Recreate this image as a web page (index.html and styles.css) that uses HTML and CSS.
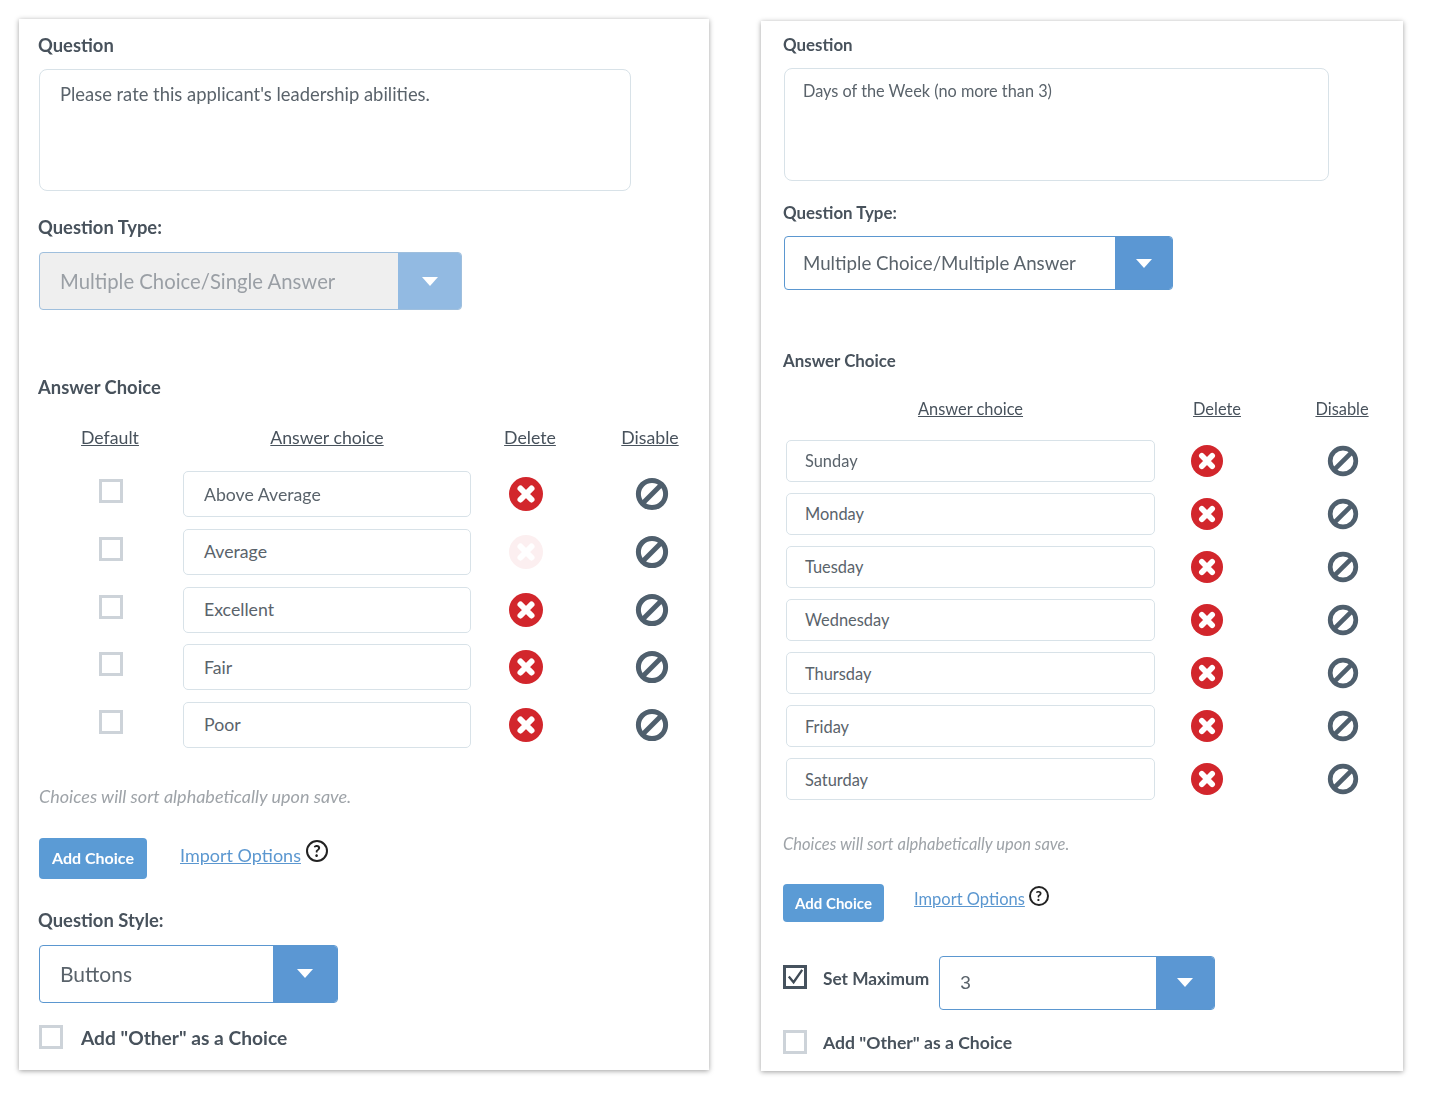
FILE: index.html
```html
<!DOCTYPE html>
<html lang="en">
<head>
<meta charset="utf-8">
<title>Question editor</title>
<link rel="stylesheet" href="styles.css">
</head>
<body>
<svg class="defs" width="0" height="0" aria-hidden="true">
  <symbol id="del" viewBox="0 0 34 34">
    <circle cx="17" cy="17" r="17" fill="#d2262c"/>
    <path d="M11.5 11.5l11 11M22.5 11.5l-11 11" stroke="#fff" stroke-width="6" stroke-linecap="round"/>
  </symbol>
  <symbol id="dis" viewBox="0 0 34 34">
    <circle cx="17" cy="17" r="13.6" fill="none" stroke="#4f5f6d" stroke-width="5"/>
    <path d="M26.5 7.5L7.5 26.5" stroke="#4f5f6d" stroke-width="5"/>
  </symbol>
</svg>
<main class="page">
  <section class="card card-a">
    <h2 class="label q-label">Question</h2>
    <div class="textarea">Please rate this applicant's leadership abilities.</div>
    <h2 class="label type-label">Question Type:</h2>
    <div class="select select-type is-disabled"><span class="select-value">Multiple Choice/Single Answer</span><span class="select-btn"><i class="caret"></i></span></div>
    <h2 class="label answer-label">Answer Choice</h2>
    <div class="grid">
      <div class="head">Default</div><div class="head">Answer choice</div><div class="head head-del">Delete</div><div class="head head-dis">Disable</div>
      <div class="cell"><span class="check"></span></div><div class="field">Above Average</div><div class="cell"><svg class="ico"><use href="#del"/></svg></div><div class="cell cell-dis"><svg class="ico"><use href="#dis"/></svg></div>
      <div class="cell"><span class="check"></span></div><div class="field">Average</div><div class="cell"><svg class="ico faded"><use href="#del"/></svg></div><div class="cell cell-dis"><svg class="ico"><use href="#dis"/></svg></div>
      <div class="cell"><span class="check"></span></div><div class="field">Excellent</div><div class="cell"><svg class="ico"><use href="#del"/></svg></div><div class="cell cell-dis"><svg class="ico"><use href="#dis"/></svg></div>
      <div class="cell"><span class="check"></span></div><div class="field">Fair</div><div class="cell"><svg class="ico"><use href="#del"/></svg></div><div class="cell cell-dis"><svg class="ico"><use href="#dis"/></svg></div>
      <div class="cell"><span class="check"></span></div><div class="field">Poor</div><div class="cell"><svg class="ico"><use href="#del"/></svg></div><div class="cell cell-dis"><svg class="ico"><use href="#dis"/></svg></div>
    </div>
    <p class="note">Choices will sort alphabetically upon save.</p>
    <div class="actions">
      <button class="btn">Add Choice</button>
      <a class="link" href="#">Import Options</a>
      <span class="help">?</span>
    </div>
    <h2 class="label style-label">Question Style:</h2>
    <div class="select select-style"><span class="select-value">Buttons</span><span class="select-btn"><i class="caret"></i></span></div>
    <div class="check-row other-row"><span class="check"></span><span class="label">Add "Other" as a Choice</span></div>
  </section>

  <section class="card card-b">
    <h2 class="label q-label">Question</h2>
    <div class="textarea">Days of the Week (no more than 3)</div>
    <h2 class="label type-label">Question Type:</h2>
    <div class="select select-type"><span class="select-value">Multiple Choice/Multiple Answer</span><span class="select-btn"><i class="caret"></i></span></div>
    <h2 class="label answer-label">Answer Choice</h2>
    <div class="grid">
      <div class="head head-ans">Answer choice</div><div class="head head-del">Delete</div><div class="head head-dis">Disable</div>
      <div class="field">Sunday</div><div class="cell"><svg class="ico"><use href="#del"/></svg></div><div class="cell cell-dis"><svg class="ico"><use href="#dis"/></svg></div>
      <div class="field">Monday</div><div class="cell"><svg class="ico"><use href="#del"/></svg></div><div class="cell cell-dis"><svg class="ico"><use href="#dis"/></svg></div>
      <div class="field">Tuesday</div><div class="cell"><svg class="ico"><use href="#del"/></svg></div><div class="cell cell-dis"><svg class="ico"><use href="#dis"/></svg></div>
      <div class="field">Wednesday</div><div class="cell"><svg class="ico"><use href="#del"/></svg></div><div class="cell cell-dis"><svg class="ico"><use href="#dis"/></svg></div>
      <div class="field">Thursday</div><div class="cell"><svg class="ico"><use href="#del"/></svg></div><div class="cell cell-dis"><svg class="ico"><use href="#dis"/></svg></div>
      <div class="field">Friday</div><div class="cell"><svg class="ico"><use href="#del"/></svg></div><div class="cell cell-dis"><svg class="ico"><use href="#dis"/></svg></div>
      <div class="field">Saturday</div><div class="cell"><svg class="ico"><use href="#del"/></svg></div><div class="cell cell-dis"><svg class="ico"><use href="#dis"/></svg></div>
    </div>
    <p class="note">Choices will sort alphabetically upon save.</p>
    <div class="actions">
      <button class="btn">Add Choice</button>
      <a class="link" href="#">Import Options</a>
      <span class="help">?</span>
    </div>
    <div class="check-row max-row">
      <span class="check is-checked"><svg viewBox="0 0 24 24" width="23" height="23"><path d="M5 12l5 6 9-13" fill="none" stroke="#3f4a55" stroke-width="2.4"/></svg></span>
      <span class="label">Set Maximum</span>
      <div class="select select-max"><span class="select-value">3</span><span class="select-btn"><i class="caret"></i></span></div>
    </div>
    <div class="check-row other-row"><span class="check"></span><span class="label">Add "Other" as a Choice</span></div>
  </section>
</main>
</body>
</html>
```
FILE: styles.css
```css
* { box-sizing: border-box; }
html, body { margin: 0; padding: 0; background: #fff; }
body { font-family: Lato, "Noto Sans", sans-serif; color: #5a636b; width: 1433px; height: 1095px; overflow: hidden; }
.defs { position: absolute; }
.page { display: flex; align-items: flex-start; padding: 19px 0 0 19px; filter: blur(.35px); }

.card { background: #fff; box-shadow: 0 1px 5px rgba(0,0,0,.38); display: flex; flex-direction: column; align-items: flex-start; }
.card-a { width: 690px; height: 1051px; padding: 15px 0 0 19px; }
.card-b { width: 642px; height: 1050px; margin: 2px 0 0 52px; padding: 13px 0 0 22px; }

.label { margin: 0; font-size: 18.4px; line-height: 22px; font-weight: 700; color: #48525c; }
.card-b .label { font-size: 16.9px; }

.textarea { border: 1px solid #d8e2e8; border-radius: 8px; background: #fff; }
.card-a .textarea { width: 592px; height: 122px; margin: 13px 0 0 1px; padding: 12px 20px; font-size: 18.4px; line-height: 24px; }
.card-b .textarea { width: 545px; height: 113px; margin: 12px 0 0 1px; padding: 11px 18px; font-size: 16.3px; line-height: 22px; }

.select { display: flex; border: 1px solid #5b97d0; border-radius: 4px; overflow: hidden; background: #fff; }
.select-value { flex: 1; display: flex; align-items: center; padding-left: 20px; }
.select-btn { display: flex; align-items: center; justify-content: center; background: #5b97d3; }
.caret { width: 0; height: 0; border-left: 8px solid transparent; border-right: 8px solid transparent; border-top: 9px solid #fff; }
.is-disabled { background: #efefef; border-color: #9fbfdd; }
.is-disabled .select-value { color: #9a9fa5; }
.is-disabled .select-btn { background: #92bae2; }

.card-a .type-label { margin-top: 25px; }
.card-a .select-type { width: 423px; height: 58px; margin: 14px 0 0 1px; font-size: 20.3px; }
.card-a .select-type .select-btn { width: 63px; }
.card-b .type-label { margin-top: 21px; }
.card-b .select-type { width: 389px; height: 54px; margin: 12px 0 0 1px; font-size: 18.7px; }
.card-b .select-type .select-value { padding-left: 18px; }
.card-b .select-type .select-btn { width: 57px; }

.card-a .answer-label { margin-top: 66px; }
.card-b .answer-label { margin-top: 60px; }

.grid { display: grid; }
.card-a .grid { grid-template-columns: 144px 288px 110px 128px; grid-auto-rows: 57.6px; margin: 10px 0 0 1px; width: 670px; }
.card-b .grid { grid-template-columns: 372px 104px 144px; grid-auto-rows: 53.1px; margin-top: 9px; width: 620px; }

.head { display: flex; justify-content: center; align-items: flex-start; line-height: 24px; color: #48525c; text-decoration: underline; }
.card-a .head { font-size: 17.7px; padding-top: 18px; }
.card-a .head:first-child { padding-right: 2px; }
.card-b .head { font-size: 16.4px; padding-top: 16px; }
.head-del { padding-left: 8px; }
.head-dis { padding-left: 10px; }
.card-b .head-ans { padding-left: 3px; }
.card-b .head-del { padding-left: 20px; }
.card-b .head-dis { padding-left: 22px; }

.cell { display: flex; align-items: center; justify-content: center; }
.cell-dis { padding-left: 14px; }
.card-b .cell-dis { padding-left: 24px; }

.field { display: flex; align-items: center; border: 1px solid #d8e2e8; border-radius: 5px; background: #fff; }
.card-a .field { height: 46px; align-self: center; padding-left: 20px; font-size: 17.7px; }
.card-b .field { height: 42px; align-self: center; margin-left: 3px; padding-left: 18px; font-size: 16.4px; }

.ico { width: 34px; height: 34px; display: block; }
.card-b .ico { width: 32px; height: 32px; }
.faded { opacity: .07; }

.check { display: block; width: 24px; height: 24px; border: 3px solid #cdd3d9; background: #fff; flex: none; }
.card-a .cell .check { margin: -6px 1px 0 0; }
.is-checked { border-color: #46525e; }
.is-checked svg { display: block; margin: -2.5px; }

.note { margin: 0; font-style: italic; line-height: 20px; color: #9ea3a8; }
.card-a .note { margin: 32px 0 0 1px; font-size: 18px; }
.card-b .note { margin: 28px 0 0 0; font-size: 16.5px; }

.actions { display: flex; align-items: flex-start; }
.btn { border: 0; border-radius: 4px; background: #5b9bd5; color: #fff; font: 700 16px/20px Lato, "Noto Sans", sans-serif; padding: 0; }
.link { color: #5b97d0; text-decoration: underline; }
.help { display: flex; align-items: center; justify-content: center; width: 22px; height: 22px; border: 2px solid #222; border-radius: 50%; color: #222; font-size: 16px; font-weight: 900; line-height: 1; }

.card-a .actions { margin: 32px 0 0 1px; }
.card-a .btn { width: 108px; height: 41px; }
.card-a .link { margin: 5px 0 0 33px; font-size: 18px; line-height: 24px; }
.card-a .help { margin: 2px 0 0 5px; }
.card-b .actions { margin: 30px 0 0 0; }
.card-b .btn { width: 101px; height: 38px; font-size: 15px; }
.card-b .link { margin: 4px 0 0 30px; font-size: 16.5px; line-height: 22px; }
.card-b .help { margin: 2px 0 0 4px; width: 20px; height: 20px; font-size: 14px; }

.card-a .style-label { margin-top: 30px; }
.card-a .select-style { width: 299px; height: 58px; margin: 14px 0 0 1px; font-size: 21px; }
.card-a .select-style .select-btn { width: 64px; }

.check-row { display: flex; align-items: center; }
.card-a .other-row { margin: 22px 0 0 1px; gap: 18px; }
.card-a .other-row .label { font-size: 19.2px; padding-top: 2px; }
.card-b .max-row { margin: 34px 0 0 0; }
.card-b .max-row .check { margin-bottom: 12px; }
.card-b .max-row .label { margin: 0 0 8px 16px; font-size: 17.3px; }
.select-max { width: 276px; height: 54px; margin-left: 10px; font-size: 19px; font-family: "Liberation Sans", sans-serif; }
.select-max .select-btn { width: 58px; }
.card-b .other-row { margin: 20px 0 0 0; gap: 16px; }
.card-b .other-row .label { font-size: 17.6px; padding-top: 2px; }
```
